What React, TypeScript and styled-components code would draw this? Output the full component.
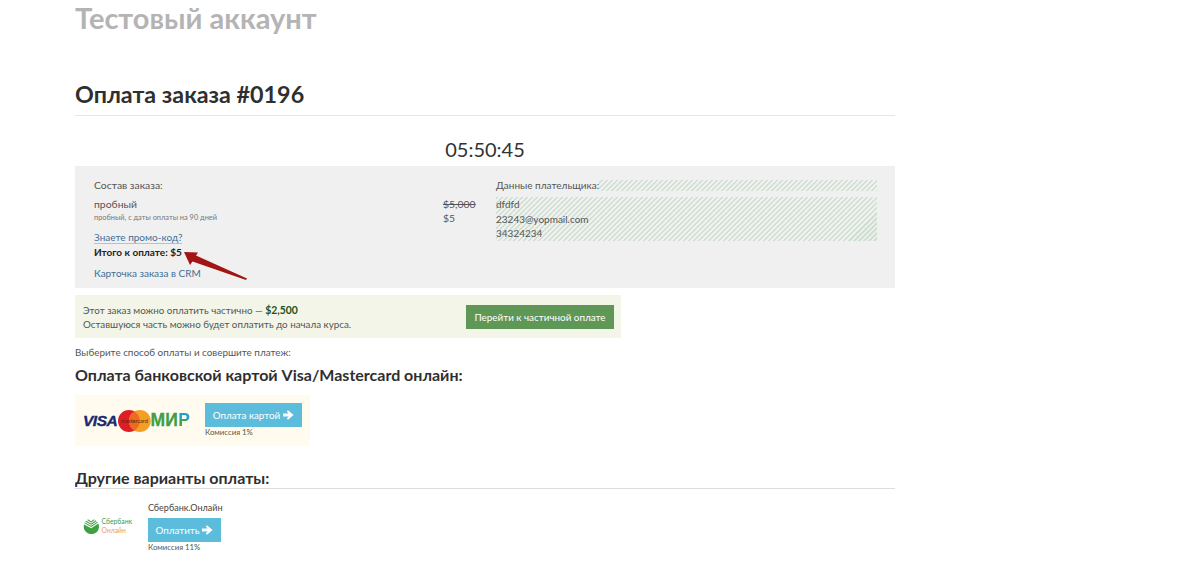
import styled, { createGlobalStyle } from "styled-components";

const GlobalStyle = createGlobalStyle`
  html, body {
    margin: 0;
    padding: 0;
    background: #fff;
    color: #4a4a4a;
    font-family: Lato, "Open Sans", sans-serif;
  }
  * { box-sizing: border-box; }
`;

const App = () => {
  return (
    <Page>
      <GlobalStyle />
      <AccountTitle>Тестовый аккаунт</AccountTitle>
      <PageTitle>Оплата заказа #0196</PageTitle>
      <Timer>05:50:45</Timer>

      <OrderPanel>
        <OrderColumn>
          <Caption>Состав заказа:</Caption>
          <OrderRow>
            <div>
              <ItemName>пробный</ItemName>
              <ItemNote>пробный, с даты оплаты на 90 дней</ItemNote>
            </div>
            <Prices>
              <OldPrice>$5,000</OldPrice>
              <span>$5</span>
            </Prices>
          </OrderRow>
          <PromoLink>Знаете промо-код?</PromoLink>
          <Total>Итого к оплате: $5</Total>
          <CrmLink>Карточка заказа в CRM</CrmLink>
        </OrderColumn>
        <PayerColumn>
          <Hatched>
            <PayerCaption>Данные плательщика:</PayerCaption>
          </Hatched>
          <HatchedBlock>
            <span>dfdfd</span>
            <span>23243@yopmail.com</span>
            <span>34324234</span>
          </HatchedBlock>
        </PayerColumn>
        <Arrow viewBox="0 0 70 36" aria-hidden="true">
          <path d="M4 4 L18 4.5 L16 7.5 L67 30.5 L66 32 L12.5 13.5 L10 17 Z" fill="#a31515" />
        </Arrow>
      </OrderPanel>

      <PartialBox>
        <PartialText>
          <div>
            Этот заказ можно оплатить частично — <PartialSum>$2,500</PartialSum>
          </div>
          <div>Оставшуюся часть можно будет оплатить до начала курса.</div>
        </PartialText>
        <PartialButton>Перейти к частичной оплате</PartialButton>
      </PartialBox>

      <Hint>Выберите способ оплаты и совершите платеж:</Hint>
      <SectionTitle>Оплата банковской картой Visa/Mastercard онлайн:</SectionTitle>

      <CardBox>
        <CardLogos>
          <VisaMark>VISA</VisaMark>
          <svg width="33" height="22" viewBox="0 0 33 22" aria-hidden="true">
            <circle cx="11" cy="11" r="11" fill="#dc1f26" />
            <circle cx="22" cy="11" r="11" fill="#f59e26" />
            <path d="M16.5 1.5 a11 11 0 0 1 0 19 a11 11 0 0 1 0 -19 Z" fill="#ee6a1f" />
            <text x="16.5" y="13" textAnchor="middle" fontSize="5.6" fill="#5a1f12" fontFamily="Lato, sans-serif">
              mastercard
            </text>
          </svg>
          <MirMark>
            МИ<MirTail>Р</MirTail>
          </MirMark>
        </CardLogos>
        <PayAction>
          <PayButton $width={97}>
            Оплата картой <ButtonArrow />
          </PayButton>
          <Fee>Комиссия 1%</Fee>
        </PayAction>
      </CardBox>

      <OtherTitle>Другие варианты оплаты:</OtherTitle>

      <SberRow>
        <SberLogo>
          <svg width="18" height="16" viewBox="0 0 18 16" aria-hidden="true">
            <path d="M1.2 6.5 L9 10.5 L16.6 5.4 A8.3 8 0 1 1 1.2 6.5 Z" fill="#3fa142" />
            <path d="M1.8 4.6 L9 8.4 L15.8 3.8 M3 2.8 L9 6 L14.4 2.3 M5 1.2 L9 3.5 L12.4 1" stroke="#3fa142" strokeWidth="1.1" fill="none" />
          </svg>
          <SberName>
            <SberTop>Сбербанк</SberTop>
            <SberBottom>Онлайн</SberBottom>
          </SberName>
        </SberLogo>
        <PayAction>
          <MethodName>Сбербанк.Онлайн</MethodName>
          <PayButton $width={73}>
            Оплатить <ButtonArrow />
          </PayButton>
          <Fee>Комиссия 11%</Fee>
        </PayAction>
      </SberRow>
    </Page>
  );
};

const ButtonArrow = () => (
  <svg width="11" height="10" viewBox="0 0 11 10" aria-hidden="true">
    <path d="M0 3.6 H5.6 L3.8 1.4 L5 0.2 L10.6 5 L5 9.8 L3.8 8.6 L5.6 6.4 H0 Z" fill="#fff" />
  </svg>
);

export default App;

// ========== Start styled-components =========
const Page = styled.div`
  width: 820px;
  margin-left: 75px;
  height: 564px;
  overflow: hidden;
`;
const AccountTitle = styled.h2`
  margin: 0;
  padding-top: 1px;
  height: 62px;
  font-size: 29px;
  line-height: 34px;
  font-weight: 700;
  color: #b4b4b4;
`;
const PageTitle = styled.h1`
  margin: 0;
  height: 54px;
  padding-top: 14px;
  font-size: 23.3px;
  line-height: 36px;
  font-weight: 700;
  color: #2f2f2f;
  border-bottom: 1px solid #e6e6e6;
`;
const Timer = styled.div`
  height: 50px;
  padding-top: 19px;
  text-align: center;
  font-size: 20px;
  line-height: 28px;
  color: #333;
`;
const OrderPanel = styled.section`
  position: relative;
  display: grid;
  grid-template-columns: 402px 381px;
  height: 122px;
  padding: 12px 0 0 19px;
  background: #f0f0f0;
  font-size: 10px;
  color: #555;
`;
const OrderColumn = styled.div`
  display: flex;
  flex-direction: column;
`;
const Caption = styled.div`
  font-size: 10.4px;
  line-height: 14px;
`;
const OrderRow = styled.div`
  display: flex;
  justify-content: space-between;
  margin-top: 5px;
  width: 381px;
`;
const ItemName = styled.div`
  font-size: 10.4px;
  line-height: 15px;
`;
const ItemNote = styled.div`
  font-size: 7.4px;
  line-height: 12px;
  color: #777;
`;
const Prices = styled.div`
  display: flex;
  flex-direction: column;
  width: 32px;
  padding-top: 1px;
  font-size: 10.4px;
  line-height: 13.5px;
`;
const OldPrice = styled.span`
  text-decoration: line-through;
`;
const PromoLink = styled.span`
  align-self: flex-start;
  margin-top: 6px;
  line-height: 12px;
  color: #3f6f96;
  border-bottom: 1px solid #a9c6d8;
`;
const Total = styled.div`
  margin-top: 1px;
  line-height: 14px;
  font-weight: 700;
  color: #222;
`;
const CrmLink = styled.span`
  margin-top: 7px;
  line-height: 14px;
  color: #3f6f96;
`;
const PayerColumn = styled.div`
  display: flex;
  flex-direction: column;
  gap: 6px;
  margin-top: 2px;
`;
const Hatched = styled.div`
  height: 11px;
  background: repeating-linear-gradient(135deg, #cfe0d0 0 1.77px, #f0f0f0 1.77px 3.54px);
  line-height: 11px;
`;
const PayerCaption = styled.span`
  background: #f0f0f0;
`;
const HatchedBlock = styled.div`
  display: flex;
  flex-direction: column;
  height: 44px;
  background: repeating-linear-gradient(135deg, #cfe0d0 0 1.77px, #f0f0f0 1.77px 3.54px);
  line-height: 14.5px;
`;
const Arrow = styled.svg`
  position: absolute;
  left: 105px;
  top: 82px;
  width: 70px;
  height: 36px;
`;
const PartialBox = styled.section`
  display: flex;
  justify-content: space-between;
  align-items: center;
  width: 546px;
  height: 43px;
  margin-top: 7px;
  padding: 0 7px 0 8px;
  background: #f2f5e8;
`;
const PartialText = styled.div`
  font-size: 9.8px;
  line-height: 14px;
  color: #555;
`;
const PartialSum = styled.b`
  font-size: 10.4px;
  color: #23521f;
`;
const PartialButton = styled.button`
  width: 148px;
  height: 24px;
  padding: 0;
  border: 0;
  background: #5f9757;
  color: #fff;
  font: 400 9.9px Lato, sans-serif;
`;
const Hint = styled.div`
  margin-top: 7px;
  font-size: 9.9px;
  line-height: 14px;
  color: #555;
`;
const SectionTitle = styled.h3`
  margin: 5px 0 0;
  font-size: 16px;
  line-height: 22px;
  font-weight: 700;
  color: #2f2f2f;
`;
const CardBox = styled.section`
  display: flex;
  gap: 15px;
  width: 235px;
  height: 51px;
  margin-top: 9px;
  padding: 8px 8px 0;
  background: #fffbef;
`;
const CardLogos = styled.div`
  display: flex;
  align-items: center;
  width: 107px;
  height: 35px;
`;
const VisaMark = styled.span`
  width: 35px;
  font: italic 700 15.5px "Liberation Sans", sans-serif;
  letter-spacing: -0.5px;
  color: #1a2a6c;
  -webkit-text-stroke: 0.4px #1a2a6c;
`;
const MirMark = styled.span`
  font: 700 17.5px "Liberation Sans", sans-serif;
  letter-spacing: 0.2px;
  color: #3f9e46;
  -webkit-text-stroke: 0.3px #3f9e46;
`;
const MirTail = styled.span`
  background: linear-gradient(180deg, #1f9fc9 0 50%, #3f9e46 50% 100%);
  -webkit-background-clip: text;
  background-clip: text;
  color: transparent;
  -webkit-text-stroke: 0;
`;
const PayAction = styled.div`
  display: flex;
  flex-direction: column;
`;
const PayButton = styled.button<{ $width: number }>`
  display: flex;
  align-items: center;
  justify-content: center;
  gap: 3px;
  width: ${({ $width }) => $width}px;
  height: 24px;
  padding: 0;
  border: 0;
  background: #5bbcdb;
  color: #fff;
  font: 400 9.8px Lato, sans-serif;
`;
const Fee = styled.div`
  font-size: 7.8px;
  line-height: 11px;
  color: #555;
`;
const OtherTitle = styled.h3`
  margin: 21px 0 0;
  height: 22px;
  font-size: 16px;
  line-height: 21px;
  font-weight: 700;
  color: #2f2f2f;
  border-bottom: 1px solid #ddd;
`;
const SberRow = styled.section`
  display: flex;
  align-items: flex-start;
  gap: 16px;
  margin-top: 12px;
  padding-left: 8px;
`;
const SberLogo = styled.div`
  display: flex;
  align-items: center;
  gap: 2px;
  width: 49px;
  margin-top: 16px;
`;
const SberName = styled.div`
  display: flex;
  flex-direction: column;
  font-size: 6.8px;
  line-height: 8.5px;
  font-weight: 400;
`;
const SberTop = styled.span`
  color: #3d9a4a;
`;
const SberBottom = styled.span`
  color: #e8a15c;
`;
const MethodName = styled.div`
  margin-bottom: 4px;
  font-size: 9px;
  line-height: 13px;
  color: #444;
`;
// ========== End styled-components =========
